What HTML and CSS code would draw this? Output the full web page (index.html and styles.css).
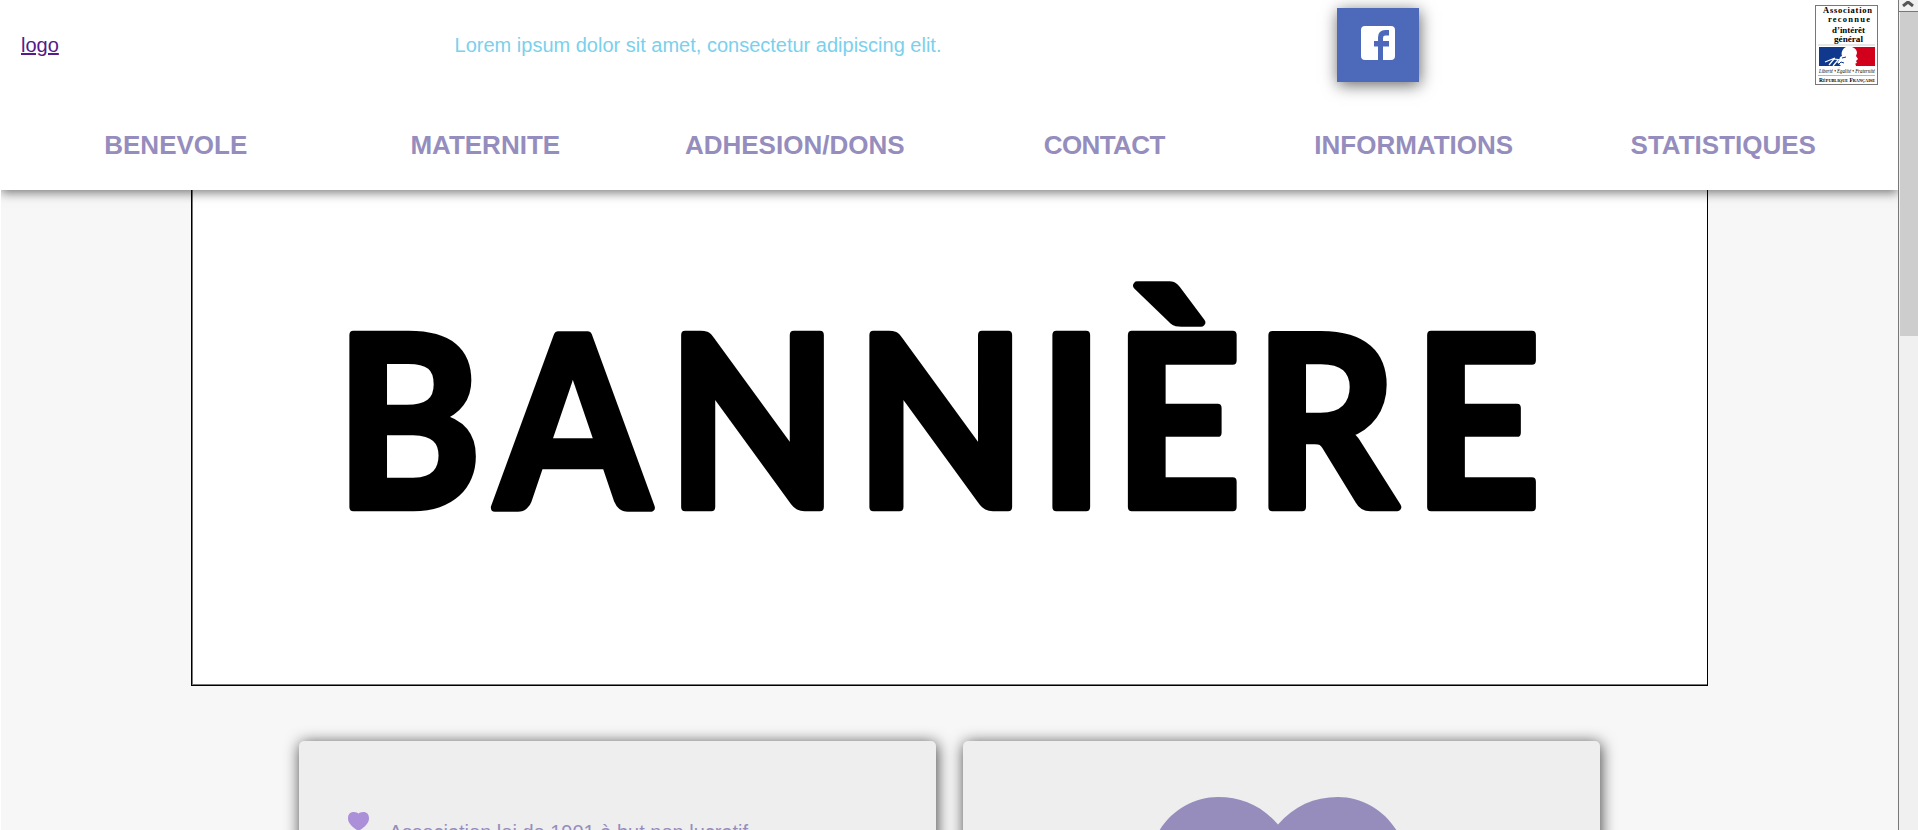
FILE: index.html
```
<!DOCTYPE html>
<html lang="fr">
<head>
<meta charset="utf-8">
<title>Association</title>
<link rel="stylesheet" href="styles.css">
</head>
<body>
<div class="window">
  <div class="page">
    <header class="header">
      <div class="top">
        <a class="logo" href="#">logo</a>
        <p class="tagline">Lorem ipsum dolor sit amet, consectetur adipiscing elit.</p>
        <a class="facebook" href="#" aria-label="Facebook">
          <svg width="34" height="34" viewBox="0 0 34 34"><path fill="#fff" d="M4 0H30Q34 0 34 4V30Q34 34 30 34H22V20.500H28V15H22V12Q22 9.600 24.400 9.600H28V4H24.500Q17 4 17 11.500V15H13V20.500H17V34H4Q0 34 0 30V4Q0 0 4 0Z"/></svg>
        </a>
        <svg class="badge" width="63" height="80" viewBox="0 0 63 80">
          <rect x=".5" y=".5" width="62" height="79" fill="#fff" stroke="#777"/>
          <g class="badge-title">
            <text x="8" y="8" textLength="49">Association</text>
            <text x="13" y="17.300" textLength="42">reconnue</text>
            <text x="17" y="27.500" textLength="33" lengthAdjust="spacingAndGlyphs">d’intérêt</text>
            <text x="19" y="36.500" textLength="29" lengthAdjust="spacingAndGlyphs">général</text>
          </g>
          <path d="M3 40H60" stroke="#bbb" stroke-width=".7"/>
          <path fill="#10388c" d="M4 42H31C27 44 26 48 27 51C23 52 26 56 22 57L26 61H4Z"/>
          <path fill="#d3001b" d="M37 42H60V61H41C41 59 39 59 42 58L41 56L43 54L41 51L42 48C42 45 40 43 37 42Z"/>
          <path fill="none" stroke="#fff" stroke-width="1.200" d="M14 60L19 54L26 55M18 61L23 55M10 57L20 53"/>
          <path fill="none" stroke="#10388c" stroke-width="1" d="M22 61L26 57L29 58M27 53L31 52"/>
          <text class="badge-motto" x="4" y="67.500" textLength="56" lengthAdjust="spacingAndGlyphs">Liberté • Égalité • Fraternité</text>
          <path d="M3 70.500H60" stroke="#999" stroke-width=".7"/>
          <text class="badge-state" x="4" y="76.500" textLength="56" lengthAdjust="spacingAndGlyphs">République Française</text>
        </svg>
      </div>
      <nav class="nav">
        <a>BENEVOLE</a><a>MATERNITE</a><a>ADHESION/DONS</a><a class="nav-tight">CONTACT</a><a>INFORMATIONS</a><a>STATISTIQUES</a>
      </nav>
    </header>
    <main>
      <section class="banner">
        <svg width="1515" height="495" viewBox="192 190 1515 495">
          <text class="banner-text" transform="scale(.93 1)" y="507" x="360.8 533.3 717.5 920 1116.7 1197.8 1349 1519.5">BANNIÈRE</text>
        </svg>
      </section>
      <section class="cards">
        <article class="card">
          <ul class="facts">
            <li>
              <svg width="21" height="20" viewBox="0 0 21 20"><path fill="#ab8fd9" d="M10.500 1.800C12-.3 21-2 21 6.500C21 12 15 16 10.500 19C6 16 0 12 0 6.500C0-2 9-.3 10.500 1.800Z"/></svg>
              <span>Association loi de 1901 à but non lucratif</span>
            </li>
          </ul>
        </article>
        <article class="card card-heart">
          <svg width="260" height="230" viewBox="0 0 260 230"><path fill="#968dbd" d="M130 27.500C114 9 94 0 70 0C34 0 0 30 0 75C0 130 80 180 130 225C180 180 260 130 260 75C260 30 226 0 190 0C166 0 146 9 130 27.500Z"/></svg>
        </article>
      </section>
    </main>
  </div>
  <div class="scrollbar">
    <div class="scroll-up"><svg width="12" height="6" viewBox="0 0 12 6"><path d="M1 5L6 1L11 5" fill="none" stroke="#555" stroke-width="3"/></svg></div>
    <div class="scroll-thumb"></div>
  </div>
</div>
</body>
</html>
```
FILE: styles.css
```
* { box-sizing: border-box; }
body { margin: 0; background: #fff; font: 20px "Liberation Sans", Arial, sans-serif; overflow: hidden; }
p, ul { margin: 0; padding: 0; list-style: none; }
.window { display: flex; height: 830px; padding-left: 1px; }
.page { flex: 1; height: 830px; background: #f7f7f7; overflow: hidden; }
.header { position: relative; height: 190px; padding: 0 20px; background: #fff; box-shadow: 0 3px 10px rgba(0,0,0,.5); }
.top { display: flex; justify-content: space-between; align-items: center; height: 90px; }
.logo { color: #551a8b; }
.tagline { color: #7bd0ec; }
.facebook { display: flex; justify-content: center; width: 82px; height: 74px; padding-top: 18px; background: #4c69ba; box-shadow: 1px 3px 15px rgba(0,0,0,.6); }
.badge { overflow: visible; }
.badge-title { font: bold 8.500px "Liberation Serif", serif; }
.badge-motto { font: italic 5.500px "Liberation Serif", serif; }
.badge-state { font: bold small-caps 6.500px "Liberation Serif", serif; }
.nav { display: grid; grid-template-columns: repeat(6, 1fr); height: 100px; padding-top: 41px; line-height: 29px; text-align: center; color: #958dbd; font-size: 26px; font-weight: bold; }
.nav-tight { letter-spacing: -.6px; }
.banner { width: 1517px; height: 496px; margin-left: 190px; border: 1px solid #000; border-top: 0; background: #fff; box-shadow: inset 1px -1px #777; }
.banner svg { display: block; }
.banner-text { font: bold 238px Lato, sans-serif; stroke: #000; stroke-width: 8.500px; stroke-linejoin: round; }
.cards { display: grid; grid-template-columns: 1fr 1fr; gap: 27px; padding: 55px 298px 0; }
.card { height: 400px; border-radius: 5px; background: #eee; box-shadow: 1px 2px 15px rgba(0,0,0,.75); }
.facts { padding: 71px 0 0 49px; }
.facts li { display: flex; gap: 20px; color: #968dbd; }
.facts span { padding-top: 9px; line-height: 23px; }
.card-heart { padding: 56px 0 0 185px; }
.scrollbar { width: 20px; border-left: 1px solid #777; background: #f0f0f0; }
.scroll-up { height: 12px; padding-left: 3px; border-bottom: 1px solid #777; line-height: 0; }
.scroll-thumb { height: 324px; margin-left: 1px; background: #cdcdcd; }
```
